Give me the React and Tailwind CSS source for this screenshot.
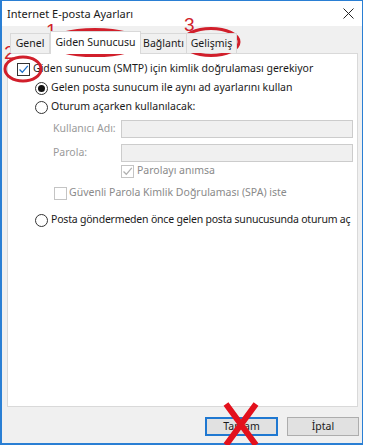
import React from "react";

const F = { fontFamily: '"Noto Sans", "Open Sans", sans-serif' };
const RED = "#d11f2b";

function Check({ checked, disabled }) {
  return (
    <div
      className={
        "w-[13px] h-[13px] border bg-white flex items-center justify-center shrink-0 " +
        (disabled ? "border-[#c4c4c4]" : "border-[#333333]")
      }
    >
      {checked && (
        <svg width="11" height="11" viewBox="0 0 11 11">
          <path
            d="M1.5 5.5 L4.3 8.3 L9.8 1.8"
            fill="none"
            stroke={disabled ? "#b0b0b0" : "#1a6fc9"}
            strokeWidth="1.3"
          />
        </svg>
      )}
    </div>
  );
}

function Radio({ checked }) {
  return (
    <div className="w-[13px] h-[13px] rounded-full border border-[#333333] bg-white flex items-center justify-center shrink-0">
      {checked && <div className="w-[7px] h-[7px] rounded-full bg-[#111111]" />}
    </div>
  );
}

export default function App() {
  return (
    <div className="relative w-[367px] h-[445px] bg-white overflow-hidden text-[#1a1a1a]" style={F}>
      <div className="w-[363px] h-[445px] border border-[#2a7fd4] border-l-2 border-b-2 flex flex-col bg-[#f0f0f0]">
        {/* title bar */}
        <div className="h-[25px] bg-white flex items-center justify-between pl-[5px] pr-[8px] shrink-0">
          <span className="text-[11px] leading-none whitespace-nowrap">Internet E-posta Ayarları</span>
          <svg width="11" height="11" viewBox="0 0 11 11">
            <path d="M0.5 0.5 L10.5 10.5 M10.5 0.5 L0.5 10.5" stroke="#222" strokeWidth="1" />
          </svg>
        </div>
        {/* tabs */}
        <div className="flex items-end pl-[8px] h-[28px] shrink-0 relative z-10 text-[10.5px] whitespace-nowrap">
          <div className="w-[40px] h-[20px] border border-b-0 border-[#d9d9d9] bg-[#f0f0f0] flex items-center justify-center mb-[1px]">
            Genel
          </div>
          <div className="w-[91px] h-[23px] border border-b-0 border-[#d9d9d9] bg-white flex items-center justify-center">
            Giden Sunucusu
          </div>
          <div className="w-[46px] h-[20px] border border-b-0 border-l-0 border-[#d9d9d9] bg-[#f0f0f0] flex items-center justify-center mb-[1px]">
            Bağlantı
          </div>
          <div className="w-[50px] h-[20px] border border-b-0 border-l-0 border-[#d9d9d9] bg-[#f0f0f0] flex items-center justify-center mb-[1px]">
            Gelişmiş
          </div>
        </div>
        {/* panel */}
        <div className="ml-[5px] -mt-[1px] w-[351px] h-[354px] border border-[#d9d9d9] bg-white flex flex-col text-[10.5px] whitespace-nowrap pt-[7px]">
          <div className="h-[16px] flex items-center pl-[9px] gap-[3px]">
            <Check checked />
            <span>Giden sunucum (SMTP) için kimlik doğrulaması gerekiyor</span>
          </div>
          <div className="h-[16px] mt-[3px] flex items-center pl-[27px] gap-[3px]">
            <Radio checked />
            <span>Gelen posta sunucum ile aynı ad ayarlarını kullan</span>
          </div>
          <div className="h-[16px] mt-[3px] flex items-center pl-[27px] gap-[3px]">
            <Radio />
            <span>Oturum açarken kullanılacak:</span>
          </div>
          <div className="h-[18px] mt-[5px] flex items-center pl-[45px] text-[#9a9a9a]">
            <span className="w-[68px]">Kullanıcı Adı:</span>
            <div className="w-[232px] h-[18px] border border-[#cccccc] bg-[#f0f0f0]" />
          </div>
          <div className="h-[18px] mt-[6px] flex items-center pl-[45px] text-[#9a9a9a]">
            <span className="w-[68px]">Parola:</span>
            <div className="w-[232px] h-[18px] border border-[#cccccc] bg-[#f0f0f0]" />
          </div>
          <div className="h-[16px] mt-[1px] flex items-center pl-[113px] gap-[3px] text-[#8a8a8a]">
            <Check checked disabled />
            <span>Parolayı anımsa</span>
          </div>
          <div className="h-[16px] mt-[6px] flex items-center pl-[46px] gap-[2px] text-[#8a8a8a]">
            <Check disabled />
            <span>Güvenli Parola Kimlik Doğrulaması (SPA) iste</span>
          </div>
          <div className="h-[16px] mt-[11px] flex items-center pl-[27px] gap-[3px]">
            <Radio />
            <span className="tracking-[-0.2px]">Posta göndermeden önce gelen posta sunucusunda oturum aç</span>
          </div>
        </div>
        {/* buttons */}
        <div className="flex justify-end gap-[9px] pr-[3px] mt-[10px] text-[10.5px]">
          <div className="w-[73px] h-[19px] border-2 border-[#1f78d1] bg-[#e1e1e1] flex items-center justify-center">
            Tamam
          </div>
          <div className="w-[72px] h-[19px] border border-[#adadad] bg-[#e1e1e1] flex items-center justify-center">
            İptal
          </div>
        </div>
      </div>

      {/* annotations */}
      <svg className="absolute left-0 top-0 pointer-events-none" width="367" height="445" viewBox="0 0 367 445">
        <ellipse cx="95" cy="42.5" rx="45.5" ry="13" fill="none" stroke={RED} strokeWidth="3" />
        <ellipse cx="211" cy="42" rx="28" ry="13.5" fill="none" stroke={RED} strokeWidth="3" />
        <ellipse cx="23" cy="69" rx="18" ry="12" fill="none" stroke={RED} strokeWidth="3" />
        <path d="M226 404 L256 445 M256 404 L226 445" stroke="#e3101c" strokeWidth="6" />
      </svg>
      <span className="absolute left-[46px] top-[21px] text-[19px] leading-none" style={{ color: RED, fontFamily: '"Liberation Sans", sans-serif' }}>1</span>
      <span className="absolute left-[184px] top-[15px] text-[19px] leading-none" style={{ color: RED, fontFamily: '"Liberation Sans", sans-serif' }}>3</span>
      <span className="absolute left-[4px] top-[43px] text-[19px] leading-none" style={{ color: RED, fontFamily: '"Liberation Sans", sans-serif' }}>2</span>
    </div>
  );
}
